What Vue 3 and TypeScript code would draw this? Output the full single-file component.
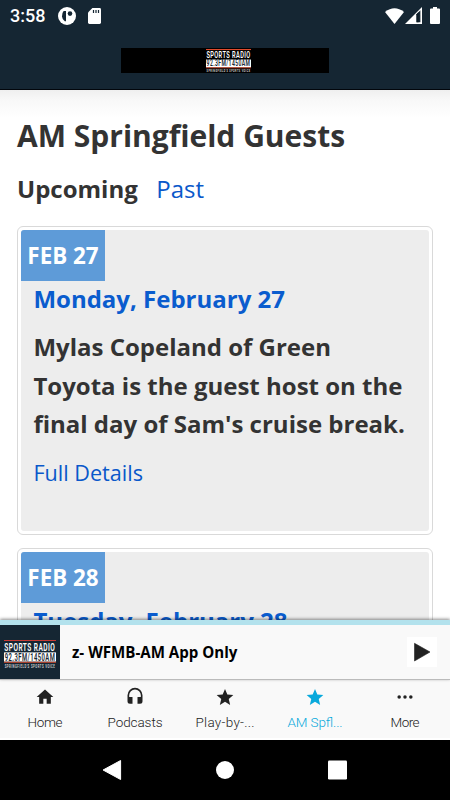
<script setup lang="ts">
interface Guest {
  badge: string
  date: string
  text: string
}

interface Tab {
  label: string
  icon: 'home' | 'headphones' | 'star' | 'more'
  active?: boolean
  width: number
}

const guests: Guest[] = [
  {
    badge: 'FEB 27',
    date: 'Monday, February 27',
    text: "Mylas Copeland of Green Toyota is the guest host on the final day of Sam's cruise break.",
  },
  { badge: 'FEB 28', date: 'Tuesday, February 28', text: '' },
]

const tabs: Tab[] = [
  { label: 'Home', icon: 'home', width: 35 },
  { label: 'Podcasts', icon: 'headphones', width: 55 },
  { label: 'Play-by-...', icon: 'star', width: 59 },
  { label: 'AM Spfl...', icon: 'star', active: true, width: 55 },
  { label: 'More', icon: 'more', width: 29 },
]
</script>

<template>
  <div class="screen">
    <header class="top">
      <div class="status">
        <span class="time">3:58</span>
        <svg class="app-icon" viewBox="0 0 18 18">
          <circle cx="9" cy="9" r="9" fill="#fff" />
          <path d="M5.6 4H8v10.2H6.8Q4.3 12.8 4 9.5 3.8 6 5.6 4Z" fill="#152633" />
          <circle cx="12" cy="6.6" r="2.3" fill="#152633" />
        </svg>
        <svg class="sd-icon" viewBox="0 0 13 16">
          <path d="M4.4 0H11.6Q13 0 13 1.4V14.6Q13 16 11.6 16H1.4Q0 16 0 14.6V4.4Z" fill="#fff" />
          <path d="M5.5 2v3M8 2v3M10.5 2v3" stroke="#152633" stroke-width="1.2" />
        </svg>
        <div class="signals">
          <svg width="19" height="16" viewBox="0 0 19 16"><path d="M0 4Q9.5-3.5 19 4L9.5 16Z" fill="#fff" /></svg>
          <svg class="cell" width="17" height="17" viewBox="0 0 17 17">
            <path d="M17 0V17H0Z" fill="#fff" />
            <path d="M11.5 7.2 15.4 3.3V15.2H11.5Z" fill="#152633" />
            <path d="M11.5 7.2 13.6 5.1V15.2H11.5Z" fill="#0c1c27" />
          </svg>
          <svg class="battery" width="10" height="17" viewBox="0 0 10 17">
            <path d="M3 0H7V1.5H9Q10 1.5 10 2.5V16Q10 17 9 17H1Q0 17 0 16V2.5Q0 1.5 1 1.5H3Z" fill="#fff" />
          </svg>
        </div>
      </div>
      <div class="banner">
        <svg class="banner-logo" viewBox="0 0 52 28" preserveAspectRatio="none">
          <rect width="52" height="1.3" fill="#e14a2c" />
          <text x="0.5" y="11" textLength="51" lengthAdjust="spacingAndGlyphs" font-size="11.5" fill="#fff">SPORTS RADIO</text>
          <rect y="12.8" width="52" height="9.6" fill="#fff" />
          <text x="0.7" y="21.2" textLength="50.6" lengthAdjust="spacingAndGlyphs" font-size="10.3" fill="#172630">92.3FM/1450AM</text>
          <rect y="22.4" width="52" height="1" fill="#e14a2c" />
          <text x="0.7" y="27.6" textLength="50.6" lengthAdjust="spacingAndGlyphs" font-size="4.6" fill="#ddd">SPRINGFIELD'S SPORTS VOICE</text>
        </svg>
      </div>
    </header>

    <main class="page">
      <h1>AM Springfield Guests</h1>
      <nav class="filters">
        <strong>Upcoming</strong>
        <a>Past</a>
      </nav>
      <article v-for="guest in guests" :key="guest.badge" class="card">
        <div class="card-body">
          <span class="badge">{{ guest.badge }}</span>
          <h2>{{ guest.date }}</h2>
          <template v-if="guest.text">
            <p>{{ guest.text }}</p>
            <a class="details">Full Details</a>
          </template>
        </div>
      </article>
    </main>

    <section class="player">
      <div class="art">
        <svg class="art-logo" viewBox="0 0 52 28" preserveAspectRatio="none">
          <rect width="52" height="1" fill="#c83a35" />
          <text x="0.3" y="10.8" textLength="51" lengthAdjust="spacingAndGlyphs" font-size="11.5" fill="#fff">SPORTS RADIO</text>
          <rect y="12.4" width="52" height="9.2" fill="#fff" />
          <text x="0.7" y="20.6" textLength="50.6" lengthAdjust="spacingAndGlyphs" font-size="10.3" fill="#172630">92.3FM/1450AM</text>
          <rect y="21.8" width="52" height=".9" fill="#e14a2c" />
          <text x="0.7" y="27.6" textLength="50.6" lengthAdjust="spacingAndGlyphs" font-size="4.9" fill="#ddd">SPRINGFIELD'S SPORTS VOICE</text>
        </svg>
      </div>
      <span class="track">z- WFMB-AM App Only</span>
      <button class="play" aria-label="Play">
        <svg width="30" height="30" viewBox="0 0 30 30"><path d="M7.5 6.3 23 15 7.5 24Z" fill="#222" stroke="#222" stroke-width=".6" /></svg>
      </button>
    </section>

    <nav class="tabs">
      <div v-for="tab in tabs" :key="tab.label" class="tab" :class="{ active: tab.active }">
        <svg class="tab-icon" viewBox="0 0 24 24" fill="currentColor">
          <path v-if="tab.icon === 'home'" d="M10 20v-6h4v6h5v-8h3L12 3 2 12h3v8z" />
          <path v-else-if="tab.icon === 'headphones'" d="M12 1a9 9 0 0 0-9 9v7a3 3 0 0 0 3 3h3v-8H5v-2a7 7 0 0 1 14 0v2h-4v8h3a3 3 0 0 0 3-3v-7a9 9 0 0 0-9-9z" />
          <path v-else-if="tab.icon === 'star'" d="M12 17.8 18.2 21.5 16.5 14.4 22 9.7 14.8 9.1 12 2.5 9.2 9.1 2 9.7 7.5 14.4 5.8 21.5z" />
          <g v-else><circle cx="5" cy="12" r="2.1" /><circle cx="12" cy="12" r="2.1" /><circle cx="19" cy="12" r="2.1" /></g>
        </svg>
        <svg class="tab-label" width="70" height="18">
          <text x="35" y="13" text-anchor="middle" :textLength="tab.width" fill="currentColor">{{ tab.label }}</text>
        </svg>
      </div>
    </nav>

    <footer class="system">
      <svg width="20" height="22" viewBox="0 0 20 22"><path d="M17.6 1.5V20.5L.1 11Z" fill="#fff" stroke="#fff" stroke-linejoin="round" /></svg>
      <svg width="20" height="20" viewBox="0 0 20 20"><circle cx="10" cy="10" r="9" fill="#fff" /></svg>
      <svg width="20" height="20" viewBox="0 0 20 20"><rect width="19" height="19" rx="1.2" y=".5" fill="#fff" /></svg>
    </footer>
  </div>
</template>

<style>
body {
  margin: 0;
  overflow: hidden;
}
</style>

<style scoped>
.screen {
  width: 450px;
  height: 800px;
  display: flex;
  flex-direction: column;
  overflow: hidden;
  background: #fff;
  color: #333;
  font-family: 'Open Sans', 'Noto Sans', sans-serif;
}
svg {
  display: block;
  flex: none;
  overflow: visible;
}
.top {
  flex: none;
  box-sizing: border-box;
  height: 90px;
  background: #152633;
  border-bottom: 1px solid #02060c;
}
.status {
  display: flex;
  align-items: center;
  height: 31px;
  padding: 0 10px;
}
.time {
  width: 48px;
  color: #fff;
  font: 500 18px/31px Roboto, sans-serif;
}
.app-icon {
  width: 18px;
  height: 18px;
}
.sd-icon {
  width: 13px;
  height: 16px;
  margin-left: 12px;
}
.signals {
  display: flex;
  align-items: center;
  margin-left: auto;
}
.cell {
  margin-left: 1px;
}
.battery {
  margin-left: 8px;
}
.banner {
  display: flex;
  justify-content: center;
  width: 208px;
  height: 25px;
  margin: 16.5px auto 0;
  background: #000;
}
.banner-logo {
  width: 45px;
  height: 23px;
  margin: 1px 0 0 6px;
}
.banner-logo text,
.art-logo text {
  font-family: Roboto, sans-serif;
  font-weight: 600;
  letter-spacing: 0.8px;
}
.page {
  flex: 1;
  min-height: 0;
  overflow: hidden;
  padding: 0 17px;
  background: linear-gradient(#efefef, #f8f8f8 10px, #fff 28px);
}
h1 {
  margin: 24px 0 0;
  font-size: 30px;
  line-height: 44px;
  font-weight: 700;
  white-space: nowrap;
}
.filters {
  display: flex;
  gap: 18.6px;
  height: 36px;
  margin: 13px 0 19px;
  font-size: 24px;
  line-height: 36px;
}
.filters strong {
  font-weight: 700;
}
a {
  color: #0a58ca;
  font-weight: 400;
}
.card {
  box-sizing: border-box;
  height: 309px;
  margin-bottom: 12.5px;
  padding: 3px;
  border: 1px solid #d9d9d9;
  border-radius: 6px;
  background: #fff;
}
.card-body {
  height: 301px;
  overflow: hidden;
  border-radius: 3px;
  background: #ededed;
}
.badge {
  display: block;
  width: 84px;
  height: 51px;
  background: #5e9bd8;
  color: #fff;
  font-size: 22.4px;
  font-weight: 700;
  line-height: 52px;
  text-align: center;
}
h2 {
  margin: -1px 0 0 12.4px;
  color: #0a5cce;
  font-size: 24px;
  line-height: 38px;
  font-weight: 700;
  white-space: nowrap;
}
p {
  width: 380px;
  margin: 10px 0 0 12.4px;
  font-size: 24px;
  line-height: 38.6px;
  font-weight: 700;
}
.details {
  display: block;
  margin: 10px 0 0 12.4px;
  font-size: 21.6px;
  line-height: 38px;
}
.player {
  position: relative;
  flex: none;
  display: flex;
  align-items: center;
  box-sizing: border-box;
  height: 60px;
  border-top: 5px solid #b3e2ed;
  border-bottom: 1px solid #bbb;
  background: #f9f9f9;
  box-shadow: 0 -1px 3px rgba(0, 0, 0, 0.45);
}
.art {
  display: flex;
  justify-content: center;
  align-items: center;
  width: 60px;
  height: 54px;
  background: #152633;
}
.art-logo {
  width: 52px;
  height: 28px;
  margin-top: 3px;
}
.track {
  margin-left: 12px;
  color: #000;
  font-size: 15.1px;
  font-weight: 700;
}
.play {
  width: 30px;
  height: 30px;
  margin: 0 13px 0 auto;
  padding: 0;
  border: 0;
  background: #fff;
}
.tabs {
  flex: none;
  display: grid;
  grid-template-columns: repeat(5, 1fr);
  height: 58px;
  background: #f9f9f9;
  border-bottom: 2px solid #fff;
}
.tab {
  display: flex;
  flex-direction: column;
  align-items: center;
  color: #222;
}
.tab.active {
  color: #08a9dc;
}
.tab-icon {
  width: 20px;
  height: 20px;
  margin-top: 7px;
}
.tab-label {
  margin-top: 7px;
}
.tab-label text {
  font: 300 13.5px Roboto, sans-serif;
}
.system {
  flex: none;
  display: flex;
  align-items: center;
  justify-content: center;
  gap: 92.5px;
  height: 60px;
  background: #000;
}
</style>
